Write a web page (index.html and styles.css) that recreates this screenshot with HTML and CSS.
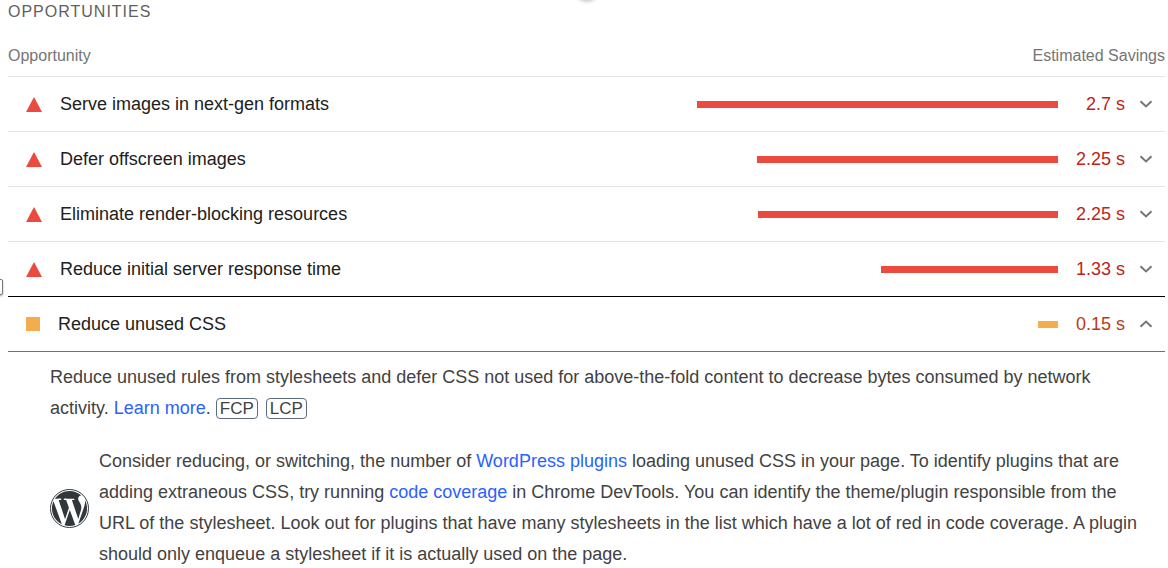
FILE: index.html
```html
<!DOCTYPE html>
<html lang="en">
<head>
  <meta charset="UTF-8" />
  <meta name="viewport" content="width=device-width, initial-scale=1.0" />
  <title>Opportunities</title>
  <link rel="stylesheet" href="styles.css">
</head>
<body>
  <div class="top-shadow"></div>
  <div class="side-handle"></div>

  <main class="report">
    <h1 class="group-title">Opportunities</h1>

    <div class="table-head">
      <span>Opportunity</span>
      <span>Estimated Savings</span>
    </div>

    <details class="audit fail">
      <summary>
        <span class="audit-title"><span class="marker"></span>Serve images in next-gen formats</span>
        <span class="track"><span class="bar" style="width: 100%"></span></span>
        <span class="savings">2.7 s</span>
        <svg class="chevron" viewBox="0 0 14 8"><path d="M1.5 1.2 7 6.4l5.5-5.2" /></svg>
      </summary>
    </details>

    <details class="audit fail">
      <summary>
        <span class="audit-title"><span class="marker"></span>Defer offscreen images</span>
        <span class="track"><span class="bar" style="width: 83.4%"></span></span>
        <span class="savings">2.25 s</span>
        <svg class="chevron" viewBox="0 0 14 8"><path d="M1.5 1.2 7 6.4l5.5-5.2" /></svg>
      </summary>
    </details>

    <details class="audit fail">
      <summary>
        <span class="audit-title"><span class="marker"></span>Eliminate render-blocking resources</span>
        <span class="track"><span class="bar" style="width: 83.1%"></span></span>
        <span class="savings">2.25 s</span>
        <svg class="chevron" viewBox="0 0 14 8"><path d="M1.5 1.2 7 6.4l5.5-5.2" /></svg>
      </summary>
    </details>

    <details class="audit fail">
      <summary>
        <span class="audit-title"><span class="marker"></span>Reduce initial server response time</span>
        <span class="track"><span class="bar" style="width: 49%"></span></span>
        <span class="savings">1.33 s</span>
        <svg class="chevron" viewBox="0 0 14 8"><path d="M1.5 1.2 7 6.4l5.5-5.2" /></svg>
      </summary>
    </details>

    <details class="audit average" open>
      <summary>
        <span class="audit-title"><span class="marker"></span>Reduce unused CSS</span>
        <span class="track"><span class="bar" style="width: 5.5%"></span></span>
        <span class="savings">0.15 s</span>
        <svg class="chevron" viewBox="0 0 14 8"><path d="M1.5 1.2 7 6.4l5.5-5.2" /></svg>
      </summary>

      <div class="audit-body">
        <p>Reduce unused rules from stylesheets and defer CSS not used for above-the-fold content to decrease bytes consumed by network activity. <a href="#">Learn more</a>. <span class="metric">FCP</span> <span class="metric">LCP</span></p>

        <div class="stack-tip">
          <svg class="wp-logo" viewBox="0 0 24 24" role="img" aria-label="WordPress">
            <circle cx="12" cy="12" r="11.7" />
            <path d="M21.469 6.825c.84 1.537 1.318 3.3 1.318 5.175 0 3.979-2.156 7.456-5.363 9.325l3.295-9.527c.615-1.54.82-2.771.82-3.864 0-.405-.026-.78-.07-1.11m-7.981.105c.647-.03 1.232-.105 1.232-.105.582-.075.514-.93-.067-.899 0 0-1.755.135-2.88.135-1.064 0-2.85-.15-2.85-.15-.585-.03-.661.855-.075.885 0 0 .54.061 1.125.09l1.68 4.605-2.37 7.08L5.354 6.9c.649-.03 1.234-.1 1.234-.1.585-.075.516-.93-.065-.896 0 0-1.746.138-2.874.138-.2 0-.438-.008-.69-.015C4.911 3.15 8.235 1.215 12 1.215c2.809 0 5.365 1.072 7.286 2.833-.046-.003-.091-.009-.141-.009-1.06 0-1.812.923-1.812 1.914 0 .89.513 1.643 1.06 2.531.411.72.89 1.643.89 2.977 0 .915-.354 1.994-.821 3.479l-1.075 3.585-3.9-11.61.001.014zM12 22.784c-1.059 0-2.081-.153-3.048-.437l3.237-9.406 3.315 9.087c.024.053.05.101.078.149-1.12.393-2.325.609-3.582.609M1.211 12c0-1.564.336-3.05.935-4.39L7.29 21.709C3.694 19.96 1.212 16.271 1.211 12" />
          </svg>
          <p>Consider reducing, or switching, the number of <a href="#">WordPress plugins</a> loading unused CSS in your page. To identify plugins that are adding extraneous CSS, try running <a href="#">code coverage</a> in Chrome DevTools. You can identify the theme/plugin responsible from the URL of the stylesheet. Look out for plugins that have many stylesheets in the list which have a lot of red in code coverage. A plugin should only enqueue a stylesheet if it is actually used on the page.</p>
        </div>
      </div>
    </details>
  </main>
</body>
</html>
```
FILE: styles.css
```css
* {
  box-sizing: border-box;
}

body {
  margin: 0;
  background: #fff;
  color: #212121;
  font-family: "Liberation Sans", Arial, sans-serif;
  font-size: 18px;
  overflow: hidden;
}

.report {
  padding: 0 3px 0 8px;
}

.group-title {
  margin: 0;
  color: #616161;
  font-size: 16px;
  font-weight: normal;
  line-height: 24px;
  letter-spacing: 1px;
  text-transform: uppercase;
}

.table-head {
  display: flex;
  justify-content: space-between;
  padding: 20px 0 8px;
  color: #757575;
  font-size: 16px;
  line-height: 24px;
}

/* audit rows */
.audit summary {
  display: flex;
  align-items: center;
  height: 55px;
  padding-right: 12px;
  border-top: 1px solid #e4e4e4;
  list-style: none;
  cursor: pointer;
}

.audit summary::-webkit-details-marker {
  display: none;
}

.audit[open] summary {
  height: 56px;
  border-top-color: #000;
  border-bottom: 1px solid #4272d7;
}

.audit-title {
  display: flex;
  flex: 13 1 0;
  align-items: center;
  gap: 18px;
  padding-left: 18px;
}

.fail .marker {
  border: 8px solid transparent;
  border-top: 0;
  border-bottom: 15px solid #eb4a3f;
}

.average .marker {
  width: 14px;
  height: 14px;
  background: #f4ad4e;
}

.track {
  display: flex;
  flex: 7 1 0;
  justify-content: flex-end;
}

.bar {
  height: 7px;
  background: #eb4a3f;
}

.average .bar {
  background: #f4ad4e;
}

.savings {
  width: 67px;
  color: #bd2318;
  text-align: right;
}

.average .savings {
  color: #b83a18;
}

.chevron {
  width: 14px;
  height: 8px;
  margin-left: 14px;
  fill: none;
  stroke: #757575;
  stroke-width: 2;
}

.audit[open] .chevron {
  transform: rotate(180deg);
}

/* expanded details */
.audit-body {
  padding: 10px 12px 0 42px;
  color: #424242;
  line-height: 31px;
}

.audit-body p {
  margin: 0;
}

.audit-body a {
  color: #2962ff;
  text-decoration: none;
}

.metric {
  display: inline-block;
  margin-right: 3px;
  padding: 0 3px;
  border: 1px solid #5b6b80;
  border-radius: 4px;
  font-size: 17px;
  line-height: 19px;
}

.stack-tip {
  display: flex;
  align-items: center;
  gap: 10px;
  margin-top: 22px;
}

.wp-logo {
  flex: none;
  width: 39px;
  height: 39px;
  fill: #32373c;
}

.wp-logo circle {
  fill: none;
  stroke: #32373c;
  stroke-width: 0.6;
}

/* edges of the surrounding controls */
.top-shadow {
  position: absolute;
  top: -16px;
  left: 577px;
  width: 20px;
  height: 16px;
  border-radius: 50%;
  box-shadow: 0 1px 4px rgba(0, 0, 0, 0.3);
}

.side-handle {
  position: absolute;
  top: 279px;
  left: -8px;
  width: 11px;
  height: 16px;
  border: 1px solid #757575;
  border-radius: 2px;
  background: #fff;
  box-shadow: 0 1px 2px rgba(0, 0, 0, 0.3);
}
```
